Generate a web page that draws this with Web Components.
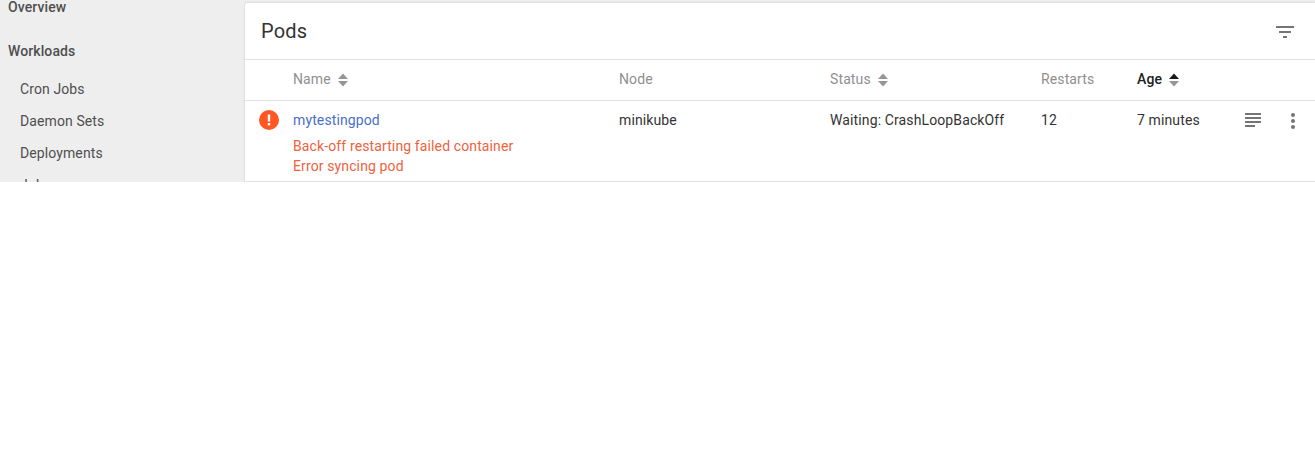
<!DOCTYPE html>
<html>
<head>
<meta charset="utf-8">
<style>
    html, body { margin: 0; padding: 0; background: #fff; font-family: Roboto, "Liberation Sans", sans-serif; }
</style>
</head>
<body>
<kube-shell>
    <side-nav slot="nav"></side-nav>
    <pods-card slot="main"></pods-card>
</kube-shell>

<script>
class KubeShell extends HTMLElement
{
    constructor(){
        super();
        this.attachShadow({mode:"open"});
        this.shadowRoot.innerHTML = `
        <style>
            :host { display: flex; height: 182px; overflow: hidden; background: #eeeeee; }
            .nav { flex: 0 0 245px; overflow: hidden; }
            .main { flex: 1; padding-top: 3px; min-width: 0; }
        </style>
        <div class="nav"><slot name="nav"></slot></div>
        <div class="main"><slot name="main"></slot></div>
        `;
    }
}

class SideNav extends HTMLElement
{
    constructor(){
        super();
        this.attachShadow({mode:"open"});
        this.shadowRoot.innerHTML = `
        <style>
            :host { display: block; margin-top: -9px; color: #4f4f4f; font-size: 14px; letter-spacing: .1px; }
            a { display: block; line-height: 32px; height: 32px; }
            .top { padding-left: 8px; font-weight: 500; }
            .group { margin-top: 12px; }
            .sub { padding-left: 20px; }
            .gap { margin-top: 6px; }
        </style>
        <a class="top">Overview</a>
        <a class="top group">Workloads</a>
        <a class="sub gap">Cron Jobs</a>
        <a class="sub">Daemon Sets</a>
        <a class="sub">Deployments</a>
        <a class="sub">Jobs</a>
        `;
    }
}

class SortArrows extends HTMLElement
{
    constructor(){
        super();
        this.attachShadow({mode:"open"});
        const up = this.hasAttribute("active") ? "#1a1a1a" : "#969696";
        this.shadowRoot.innerHTML = `
        <style>
            :host { display: inline-flex; margin: 2px 0 0 7px; }
            svg { display: block; }
        </style>
        <svg width="10" height="14" viewBox="0 0 10 14">
            <path d="M0 6 L5 0.5 L10 6 Z" fill="${up}"/>
            <path d="M0 8 L5 13.5 L10 8 Z" fill="#969696"/>
        </svg>
        `;
    }
}

class PodsCard extends HTMLElement
{
    constructor(){
        super();
        this.attachShadow({mode:"open"});
        this.shadowRoot.innerHTML = `
        <style>
            * { box-sizing: border-box; }
            :host { display: block; background: #fff; height: 179px; border-radius: 2px 0 0 0; box-shadow: 0 0 2px rgba(0,0,0,.22); color: #333333; font-size: 14px; letter-spacing: .12px; }
            .title { display: flex; align-items: center; justify-content: space-between; height: 57px; padding: 0 21px 0 16px; font-size: 20px; letter-spacing: .2px; border-bottom: 1px solid #e0e0e0; }
            .title svg { display: block; margin-top: 1px; }
            .row { display: grid; grid-template-columns: 48px 326px 211px 211px 96px 96px 1fr; }
            .head { height: 41px; align-items: center; padding-bottom: 2px; border-bottom: 1px solid #e0e0e0; color: #8f8f8f; }
            .head div { display: flex; align-items: center; }
            .head .on { color: #212121; font-weight: 500; }
            .body { height: 81px; border-bottom: 1px solid #e0e0e0; padding-top: 9px; line-height: 20px; }
            .status { padding-left: 14px; }
            .status svg { display: block; }
            a { color: #4a6fc9; }
            .err { color: #ee6240; }
            .err.first { margin-top: 6px; }
            .actions { display: flex; align-items: flex-start; gap: 30px; padding: 3px 0 0 12px; }
            .actions svg { display: block; }
        </style>
        <div class="title">
            <span>Pods</span>
            <svg width="18" height="12" viewBox="0 0 18 12"><path d="M0 1h18M3 6h12M7 11h4" stroke="#757575" stroke-width="2" fill="none"/></svg>
        </div>
        <div class="row head">
            <div></div>
            <div>Name<sort-arrows></sort-arrows></div>
            <div>Node</div>
            <div>Status<sort-arrows></sort-arrows></div>
            <div>Restarts</div>
            <div class="on">Age<sort-arrows active></sort-arrows></div>
            <div></div>
        </div>
        <div class="row body">
            <div class="status">
                <svg width="20" height="20" viewBox="0 0 20 20"><circle cx="10" cy="10" r="10" fill="#ff5722"/><rect x="8.8" y="4.5" width="2.4" height="7" fill="#fff"/><rect x="8.8" y="13" width="2.4" height="2.4" fill="#fff"/></svg>
            </div>
            <div>
                <a>mytestingpod</a>
                <div class="err first">Back-off restarting failed container</div>
                <div class="err">Error syncing pod</div>
            </div>
            <div>minikube</div>
            <div>Waiting: CrashLoopBackOff</div>
            <div>12</div>
            <div>7 minutes</div>
            <div class="actions">
                <svg width="16" height="14" viewBox="0 0 16 14"><path d="M0 1h16M0 5h16M0 9h16M0 13h10" stroke="#757575" stroke-width="2" fill="none"/></svg>
                <svg width="4" height="16" viewBox="0 0 4 16"><circle cx="2" cy="2" r="2" fill="#757575"/><circle cx="2" cy="8" r="2" fill="#757575"/><circle cx="2" cy="14" r="2" fill="#757575"/></svg>
            </div>
        </div>
        `;
    }
}

customElements.define('kube-shell', KubeShell);
customElements.define('side-nav', SideNav);
customElements.define('sort-arrows', SortArrows);
customElements.define('pods-card', PodsCard);
</script>
</body>
</html>
